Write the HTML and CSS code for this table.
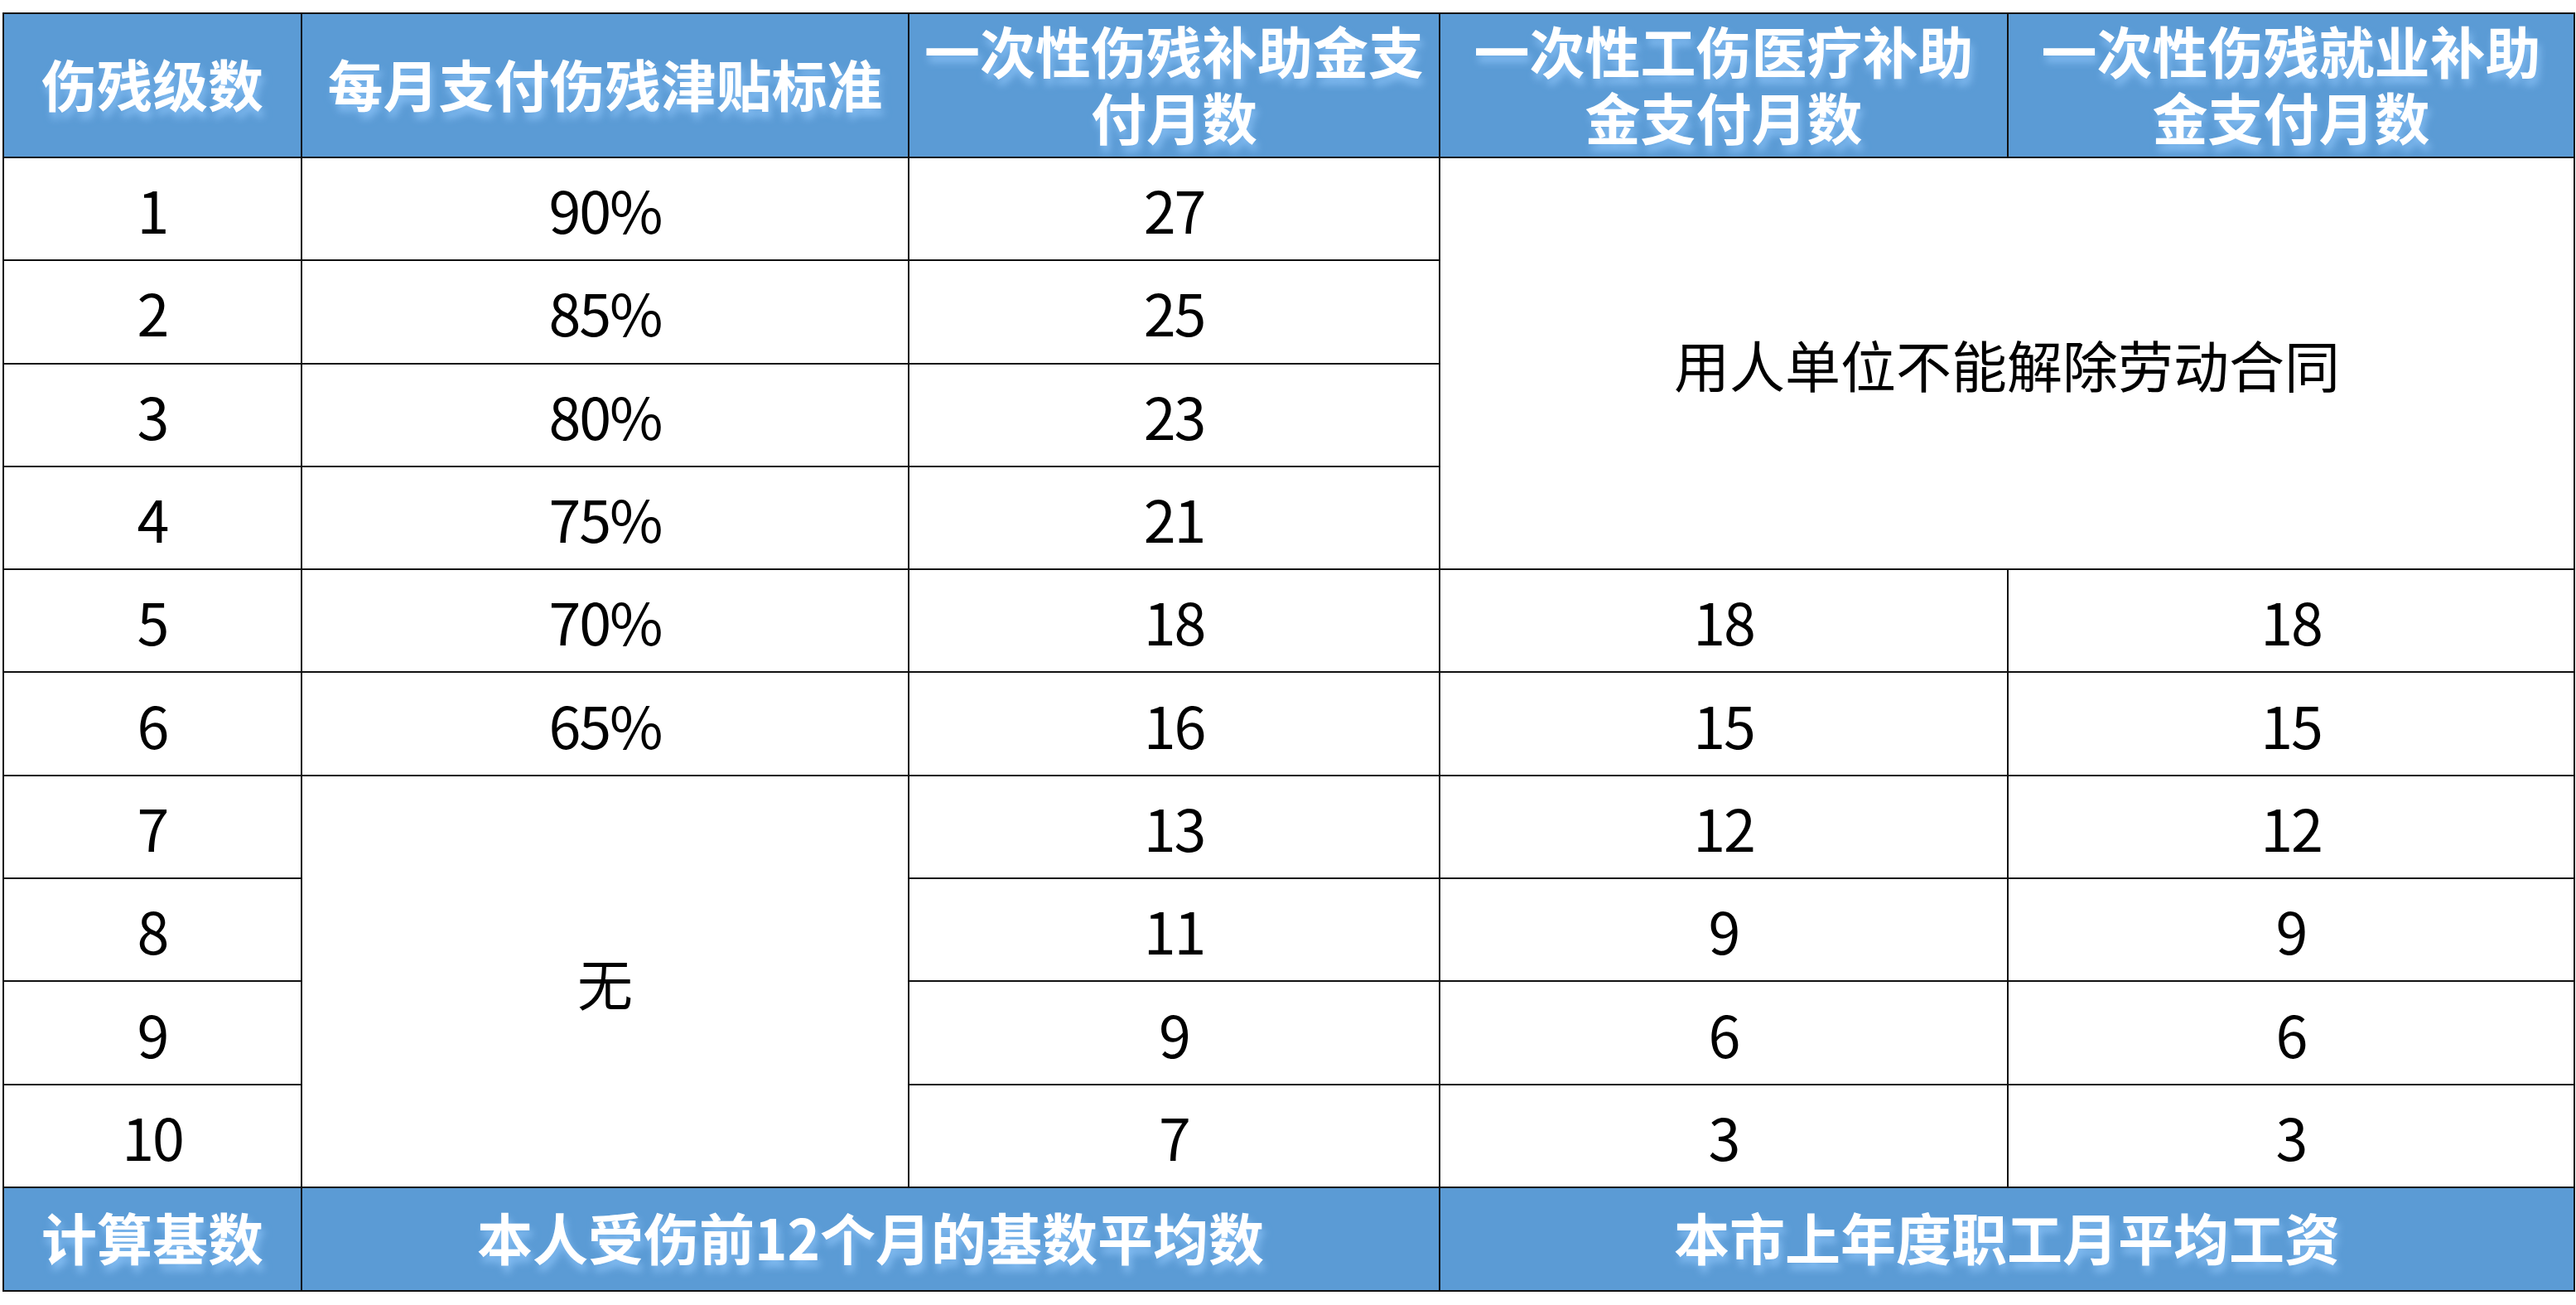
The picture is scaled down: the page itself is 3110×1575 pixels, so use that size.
FILE: index.html
```html
<!DOCTYPE html>
<html lang="zh-CN">
<head>
<meta charset="utf-8">
<title>伤残待遇表</title>
<link rel="stylesheet" href="styles.css">
</head>
<body>
<table class="grid">
  <colgroup>
    <col class="c1"><col class="c2"><col class="c3"><col class="c4"><col class="c5">
  </colgroup>
  <thead>
    <tr class="head">
      <th>伤残级数</th>
      <th>每月支付伤残津贴标准</th>
      <th><span class="ln">一次性伤残补助金支</span><span class="ln">付月数</span></th>
      <th><span class="ln">一次性工伤医疗补助</span><span class="ln">金支付月数</span></th>
      <th><span class="ln">一次性伤残就业补助</span><span class="ln">金支付月数</span></th>
    </tr>
  </thead>
  <tbody>
    <tr><td class="num">1</td><td class="num">90%</td><td class="num">27</td><td class="cjk" colspan="2" rowspan="4">用人单位不能解除劳动合同</td></tr>
    <tr><td class="num">2</td><td class="num">85%</td><td class="num">25</td></tr>
    <tr><td class="num">3</td><td class="num">80%</td><td class="num">23</td></tr>
    <tr><td class="num">4</td><td class="num">75%</td><td class="num">21</td></tr>
    <tr><td class="num">5</td><td class="num">70%</td><td class="num">18</td><td class="num">18</td><td class="num">18</td></tr>
    <tr><td class="num">6</td><td class="num">65%</td><td class="num">16</td><td class="num">15</td><td class="num">15</td></tr>
    <tr><td class="num">7</td><td class="cjk" rowspan="4">无</td><td class="num">13</td><td class="num">12</td><td class="num">12</td></tr>
    <tr><td class="num">8</td><td class="num">11</td><td class="num">9</td><td class="num">9</td></tr>
    <tr><td class="num">9</td><td class="num">9</td><td class="num">6</td><td class="num">6</td></tr>
    <tr><td class="num">10</td><td class="num">7</td><td class="num">3</td><td class="num">3</td></tr>
  </tbody>
  <tfoot>
    <tr class="foot">
      <th>计算基数</th>
      <th colspan="2">本人受伤前12个月的基数平均数</th>
      <th colspan="2">本市上年度职工月平均工资</th>
    </tr>
  </tfoot>
</table>
</body>
</html>
```

FILE: styles.css
```css
html, body {
  margin: 0;
  padding: 0;
  background: #ffffff;
}

body {
  padding: 15px 0 0 3px;
  font-family: "Noto Sans CJK SC", "Noto Sans", sans-serif;
  color: #000000;
}

.grid {
  border-collapse: collapse;
  table-layout: fixed;
  width: 3104px;
}

.c1 { width: 360px; }
.c2 { width: 733px; }
.c3 { width: 641px; }
.c4 { width: 686px; }
.c5 { width: 684px; }

.grid th,
.grid td {
  border: 2px solid #111111;
  padding: 0;
  text-align: center;
  vertical-align: middle;
}

.head th,
.foot th {
  background: #5b9bd5;
  color: #ffffff;
  font-weight: 700;
  font-size: 67px;
  line-height: 80px;
  padding-bottom: 7px;
  text-shadow: 3px 8px 10px rgba(135, 192, 245, 0.9);
}

.ln {
  display: block;
  height: 80px;
  line-height: 80px;
}

.head { height: 174px; }
.foot { height: 125px; }

tbody tr { height: 124.3px; }

.num {
  font-size: 70px;
  font-weight: 400;
  letter-spacing: -2px;
  line-height: 1;
  padding-bottom: 12px;
}

.cjk {
  font-size: 67px;
  font-weight: 400;
  line-height: 1;
  padding-bottom: 8px;
}
```
